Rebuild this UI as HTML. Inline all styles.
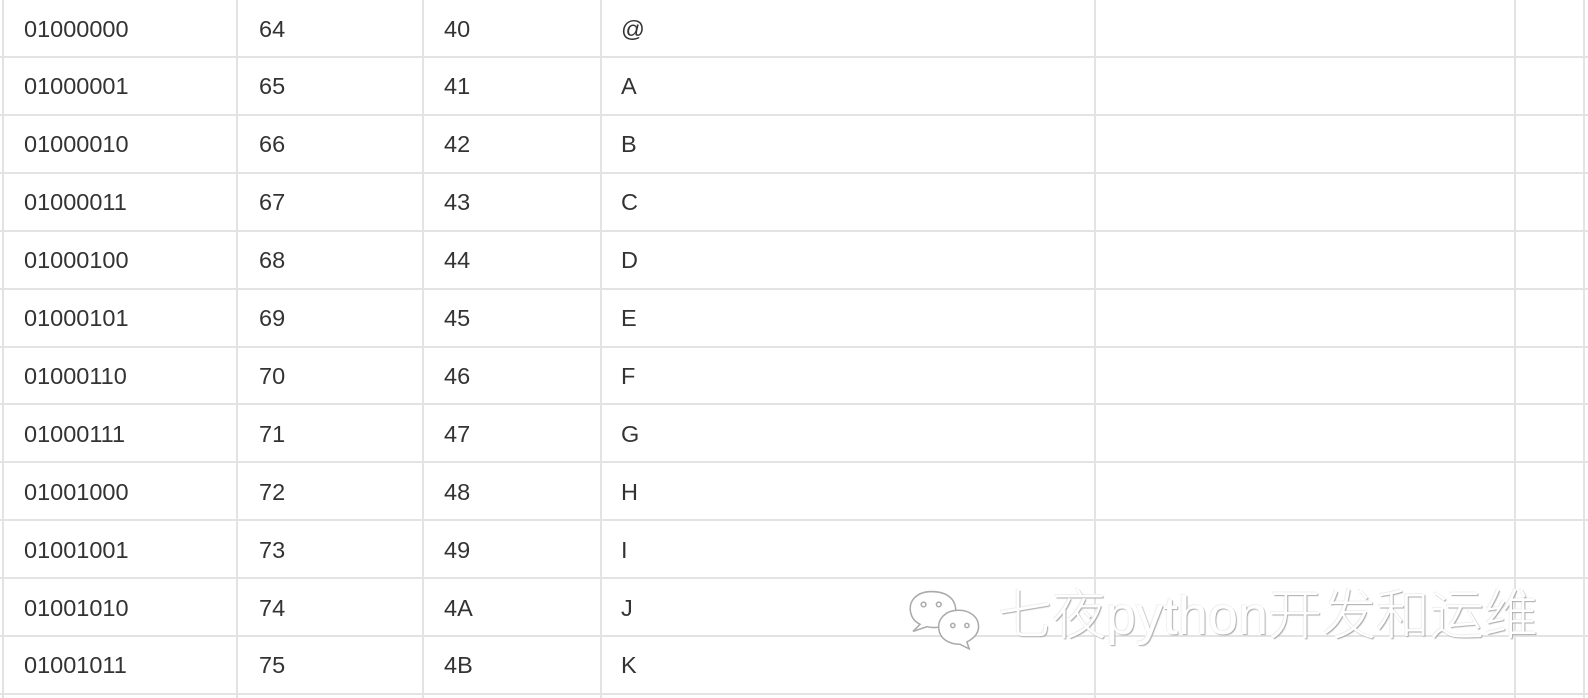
<!DOCTYPE html>
<html><head><meta charset="utf-8"><style>
body{margin:0;width:1588px;height:698px;overflow:hidden;background:#fff;font-family:"Liberation Sans",Arial,sans-serif;color:#333;position:relative}
.h{position:absolute;left:0;width:1588px;height:2px;background:#e3e3e3}
.v{position:absolute;top:0;height:698px;width:2px;background:#e3e3e3}
.t{position:absolute;font-size:23.5px;line-height:28px}
.wm{position:absolute;left:998px;top:584px;font-size:54px;line-height:64px;color:#fff;font-family:"Liberation Sans","Noto Sans CJK SC",sans-serif;font-weight:300;text-shadow:1px 1px 1px #aaa,-1px -1px 0 #f0f0f0;white-space:nowrap}
</style></head><body>
<div id="g"></div>
<div class="wm">七夜python开发和运维</div>
<svg style="position:absolute;left:906px;top:586px" width="96" height="72" viewBox="0 0 82 60" fill="#fff" stroke="#aaa" stroke-width="1.3">
<path d="M22 4 C8 4 2 13 4 22 C5 27 8 30 12 32 L6 38 L18 34 C22 35 26 35 30 34 C40 30 44 24 42 16 C40 8 32 4 22 4Z"/>
<path d="M45 20 C33 20 27 28 28 36 C29 44 36 49 46 49 L54 53 L52 47 C58 44 62 40 62 34 C62 26 55 20 45 20Z"/>
<circle cx="15" cy="15" r="2"/><circle cx="28" cy="15" r="2"/><circle cx="40" cy="33" r="1.8"/><circle cx="52" cy="33" r="1.8"/>
</svg>
<script>
var g=document.getElementById('g'),s='';
for(var i=0;i<12;i++){var y=Math.round(57+i*57.9);s+='<div class="h" style="top:'+(y-1)+'px"></div>'}
[2,236,422,600,1094,1514,1583].forEach(function(x){s+='<div class="v" style="left:'+x+'px"></div>'});
var rows=[['01000000','64','40','@'],['01000001','65','41','A'],['01000010','66','42','B'],['01000011','67','43','C'],['01000100','68','44','D'],['01000101','69','45','E'],['01000110','70','46','F'],['01000111','71','47','G'],['01001000','72','48','H'],['01001001','73','49','I'],['01001010','74','4A','J'],['01001011','75','4B','K']];
var xs=[24,259,444,621];
rows.forEach(function(r,i){var cy=28.5+i*57.9;r.forEach(function(c,j){s+='<div class="t" style="left:'+xs[j]+'px;top:'+(cy-14)+'px">'+c+'</div>'})});
g.innerHTML=s;
</script>
</body></html>
